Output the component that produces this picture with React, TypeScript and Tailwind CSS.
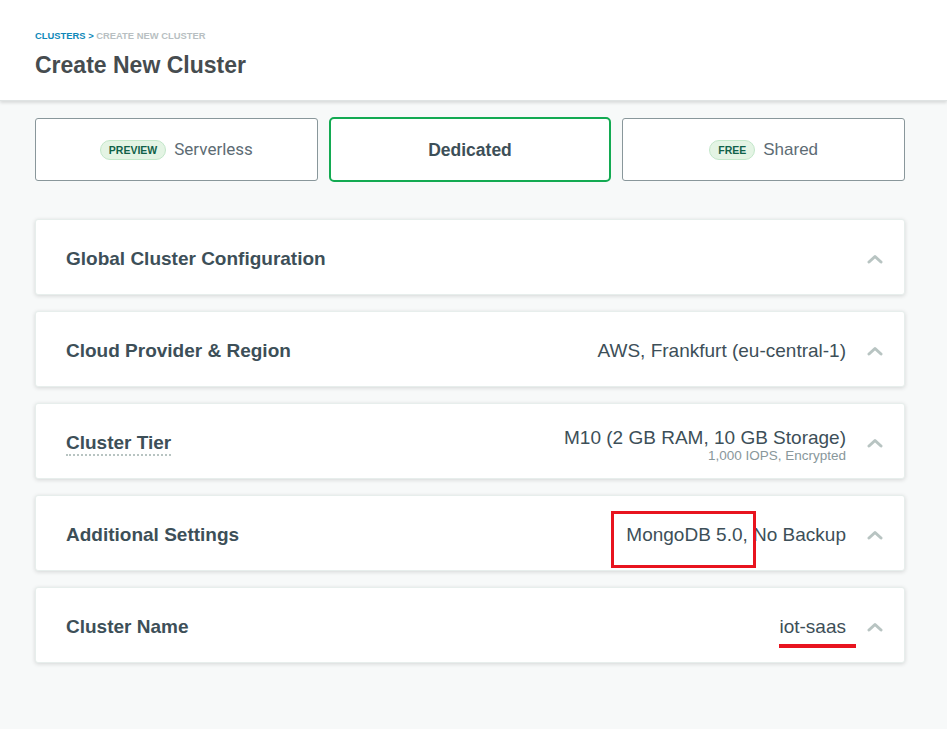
import React from "react";

const Chevron: React.FC = () => (
  <svg width="16" height="10" viewBox="0 0 16 10" className="shrink-0">
    <path d="M2 8 L8 2.5 L14 8" fill="none" stroke="#b8c4c2" strokeWidth="3" strokeLinecap="round" strokeLinejoin="round" />
  </svg>
);

const Section: React.FC<{ title: React.ReactNode; right?: React.ReactNode }> = ({ title, right }) => (
  <div className="flex h-[76px] items-center rounded-[3px] bg-white pl-[30px] pr-[21px] pt-[4px] shadow-[0_1px_4px_rgba(0,0,0,0.14)] border border-[#e7eeec]">
    <div className="flex-1 text-[19px] font-bold text-[#3d4f58]">{title}</div>
    <div className="flex items-center gap-[21px]">
      {right}
      <Chevron />
    </div>
  </div>
);

export default function App() {
  return (
    <div className="min-h-[729px] bg-[#f7f9f9] font-['Liberation_Sans',Arial,sans-serif] text-[#3d4f58]">
      <div className="h-[101px] bg-white px-[35px] pt-[30px] shadow-[0_2px_3px_rgba(0,0,0,0.12)] border-b border-[#dfe3e3]">
        <div className="text-[9.4px] font-bold uppercase leading-[11px]">
          <span className="text-[#0e88b9]">Clusters &gt;</span>{" "}
          <span className="text-[#b8bfc2]">Create New Cluster</span>
        </div>
        <h1 className="mt-[11px] text-[23px] font-bold leading-[27px] text-[#464c4f]">Create New Cluster</h1>
      </div>

      <div className="pl-[35px] pr-[42px] pt-[16px]">
        <div className="grid grid-cols-3 gap-[11px]">
          <div className="flex h-[63px] mt-[1px] pt-[1px] items-center justify-center gap-[8px] rounded-[3px] border border-[#89979b] bg-white">
            <span className="rounded-full border border-[#c3e7ca] bg-[#e4f4e4] px-[8px] py-[2px] text-[10.5px] font-bold leading-[14px] text-[#116149]">PREVIEW</span>
            <span className="font-['Roboto',sans-serif] text-[17px] text-[#5d6c74]">Serverless</span>
          </div>
          <div className="flex h-[65px] pt-[2px] items-center justify-center rounded-[5px] border-[2px] border-[#13aa52] bg-white">
            <span className="text-[17.5px] font-bold text-[#3d4f58]">Dedicated</span>
          </div>
          <div className="flex h-[63px] mt-[1px] pt-[1px] items-center justify-center gap-[8px] rounded-[3px] border border-[#89979b] bg-white">
            <span className="rounded-full border border-[#c3e7ca] bg-[#e4f4e4] px-[8px] py-[2px] text-[10.5px] font-bold leading-[14px] text-[#116149]">FREE</span>
            <span className="text-[17px] text-[#5d6c74]">Shared</span>
          </div>
        </div>

        <div className="mt-[37px] flex flex-col gap-[16px]">
          <Section title="Global Cluster Configuration" />
          <Section title="Cloud Provider & Region" right={<span className="text-[19px]">AWS, Frankfurt (eu-central-1)</span>} />
          <Section
            title={
              <span className="border-b-2 border-dotted border-[#b8c4c2] pb-[1px]">Cluster Tier</span>
            }
            right={
              <div className="flex flex-col items-end pt-[4px]">
                <span className="text-[19px] leading-[20px]">M10 (2 GB RAM, 10 GB Storage)</span>
                <span className="text-[13.5px] leading-[15px] text-[#89979b]">1,000 IOPS, Encrypted</span>
              </div>
            }
          />
          <Section
            title="Additional Settings"
            right={
              <span className="relative text-[19px]">
                MongoDB 5.0, No Backup
                <span className="absolute left-[-15px] top-[-10px] h-[57px] w-[145px] border-[3px] border-[#e8141f]" />
              </span>
            }
          />
          <Section
            title="Cluster Name"
            right={
              <span className="relative text-[19px]">
                iot-saas
                <span className="absolute left-[0px] top-[31px] h-[4px] w-[77px] bg-[#e8141f]" />
              </span>
            }
          />
        </div>
      </div>
    </div>
  );
}
